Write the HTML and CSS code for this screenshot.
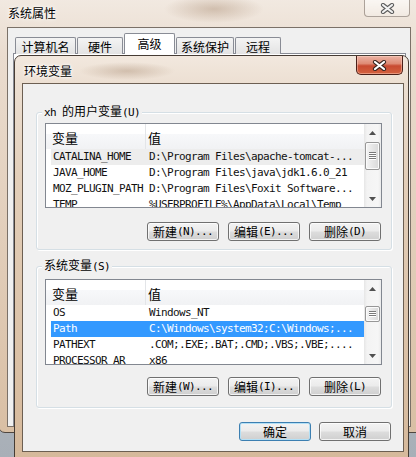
FILE: index.html
```html
<!DOCTYPE html>
<html>
<head>
<meta charset="utf-8">
<title>环境变量</title>
<link rel="stylesheet" href="styles.css">
</head>
<body>
<div class="owin">
  <div class="obar">
    <span class="otitle">系统属性</span>
    <span class="oclose"><svg width="15" height="11" viewBox="0 0 15 11"><path d="M3 2 L12 9 M12 2 L3 9" stroke="#5b5b5b" stroke-width="4.2" stroke-linecap="round"/><path d="M3 2 L12 9 M12 2 L3 9" stroke="#f2f2f2" stroke-width="2.2" stroke-linecap="round"/></svg></span>
  </div>
  <div class="oclient">
    <div class="tabs">
      <span class="tab">计算机名</span><span class="tab">硬件</span><span class="tab sel">高级</span><span class="tab">系统保护</span><span class="tab">远程</span>
    </div>
    <div class="tabpanel"></div>
  </div>
</div>

<div class="dlg">
  <div class="dbar">
    <span class="dtitle">环境变量</span>
    <span class="dclose"><svg width="15" height="11" viewBox="0 0 15 11"><path d="M3 2 L12 9 M12 2 L3 9" stroke="#3a2620" stroke-width="4.2" stroke-linecap="round"/><path d="M3 2 L12 9 M12 2 L3 9" stroke="#ffffff" stroke-width="2.2" stroke-linecap="round"/></svg></span>
  </div>
  <div class="dclient">
    <div class="grp g1">
      <span class="lbl"><span class="m">xh </span>的用户变量<span class="m">(U)</span></span>
      <div class="lv">
        <div class="lvmain">
          <div class="lvhead"><span class="hc1">变量</span><span class="hc2">值</span></div>
          <div class="row inact m"><span class="c1">CATALINA_HOME</span><span class="c2">D:\Program Files\apache-tomcat-...</span></div>
          <div class="row m"><span class="c1">JAVA_HOME</span><span class="c2">D:\Program Files\java\jdk1.6.0_21</span></div>
          <div class="row m"><span class="c1">MOZ_PLUGIN_PATH</span><span class="c2">D:\Program Files\Foxit Software...</span></div>
          <div class="row m"><span class="c1">TEMP</span><span class="c2">%USERPROFILE%\AppData\Local\Temp</span></div>
        </div>
        <div class="sb">
          <span class="arr"><svg width="7" height="4" viewBox="0 0 7 4"><path d="M0 4 L3.5 0 L7 4 Z" fill="#505050"/></svg></span>
          <span class="thumb t1"><svg width="7" height="8" viewBox="0 0 7 8"><path d="M0 0.5H7M0 2.5H7M0 4.5H7M0 6.5H7" stroke="#7a7a7a" stroke-width="1"/><path d="M0 1.5H7M0 3.5H7M0 5.5H7M0 7.5H7" stroke="#ffffff" stroke-width="1"/></svg></span>
          <span class="sp"></span>
          <span class="arr"><svg width="7" height="4" viewBox="0 0 7 4"><path d="M0 0 L3.5 4 L7 0 Z" fill="#505050"/></svg></span>
        </div>
      </div>
      <div class="btns">
        <span class="btn">新建<span class="m">(N)...</span></span>
        <span class="btn">编辑<span class="m">(E)...</span></span>
        <span class="btn">删除<span class="m">(D)</span></span>
      </div>
    </div>

    <div class="grp g2">
      <span class="lbl">系统变量<span class="m">(S)</span></span>
      <div class="lv">
        <div class="lvmain">
          <div class="lvhead"><span class="hc1">变量</span><span class="hc2">值</span></div>
          <div class="row m"><span class="c1">OS</span><span class="c2">Windows_NT</span></div>
          <div class="row sel m"><span class="c1">Path</span><span class="c2">C:\Windows\system32;C:\Windows;...</span></div>
          <div class="row m"><span class="c1">PATHEXT</span><span class="c2">.COM;.EXE;.BAT;.CMD;.VBS;.VBE;....</span></div>
          <div class="row m"><span class="c1">PROCESSOR_AR</span><span class="c2">x86</span></div>
        </div>
        <div class="sb">
          <span class="arr"><svg width="7" height="4" viewBox="0 0 7 4"><path d="M0 4 L3.5 0 L7 4 Z" fill="#505050"/></svg></span>
          <span class="thumb t2"><svg width="7" height="6" viewBox="0 0 7 6"><path d="M0 0.5H7M0 2.5H7M0 4.5H7" stroke="#7a7a7a" stroke-width="1"/><path d="M0 1.5H7M0 3.5H7M0 5.5H7" stroke="#ffffff" stroke-width="1"/></svg></span>
          <span class="sp"></span>
          <span class="arr"><svg width="7" height="4" viewBox="0 0 7 4"><path d="M0 0 L3.5 4 L7 0 Z" fill="#505050"/></svg></span>
        </div>
      </div>
      <div class="btns">
        <span class="btn">新建<span class="m">(W)...</span></span>
        <span class="btn">编辑<span class="m">(I)...</span></span>
        <span class="btn">删除<span class="m">(L)</span></span>
      </div>
    </div>

    <div class="foot">
      <span class="btn def">确定</span>
      <span class="btn">取消</span>
    </div>
  </div>
</div>
</body>
</html>
```

FILE: styles.css
```css
body {
  margin: 0;
  width: 416px;
  height: 457px;
  overflow: hidden;
  position: relative;
  background: linear-gradient(180deg, #c6cbd1, #a8afb7);
  font-family: "Noto Sans CJK SC", "Noto Sans", sans-serif;
  font-size: 12px;
  color: #000;
}

.m {
  font-family: "DejaVu Sans Mono", "Liberation Mono", monospace;
  font-size: 11px;
  letter-spacing: -0.62px;
}

/* outer window: 系统属性 */
.owin {
  position: absolute;
  left: -2px;
  top: -6px;
  width: 425px;
  height: 439px;
  box-sizing: border-box;
  border: 1px solid #4f463f;
  border-radius: 7px;
  display: flex;
  flex-direction: column;
  background:
    radial-gradient(ellipse 50px 14px at 215px 14px, rgba(150, 115, 85, 0.35), rgba(150, 115, 85, 0)),
    linear-gradient(180deg, #f2eae2 0, #eadccf 60px, #d9bfa4 100%);
}

.obar {
  height: 32px;
  flex: none;
  display: flex;
  align-items: flex-start;
}

.otitle {
  margin: 10px 0 0 9px;
  line-height: 16px;
  text-shadow: 0 0 6px #fff, 0 0 3px #fff;
}

.oclose {
  margin: 5px 12px 0 auto;
  width: 46px;
  height: 17px;
  box-sizing: border-box;
  border: 1px solid rgba(110, 95, 85, 0.55);
  border-top: none;
  border-radius: 0 0 4px 4px;
  background: linear-gradient(rgba(255, 255, 255, 0.6), rgba(255, 255, 255, 0.2));
  display: flex;
  align-items: center;
  justify-content: center;
}

.oclient {
  flex: 1;
  margin: 0 11px 5px 8px;
  box-sizing: border-box;
  border: 1px solid #7b7168;
  background: #f0f0f0;
  padding: 5px 4px 0 5px;
  display: flex;
  flex-direction: column;
}

.tabs {
  display: flex;
  align-items: flex-end;
  height: 21px;
  padding-left: 2px;
  position: relative;
  z-index: 1;
}

.tab {
  height: 17px;
  box-sizing: border-box;
  border: 1px solid #898c95;
  border-bottom: none;
  border-radius: 2px 2px 0 0;
  margin-right: 1px;
  padding-top: 1px;
  text-align: center;
  line-height: 15px;
  background: linear-gradient(#f4f4f4, #e3e3e3);
}

.tab:nth-child(1) { width: 61px; }
.tab:nth-child(2) { width: 46px; }
.tab:nth-child(3) { width: 51px; }
.tab:nth-child(4) { width: 58px; }
.tab:nth-child(5) { width: 46px; }

.tab.sel {
  height: 21px;
  padding-top: 2px;
  background: #fff;
  position: relative;
  z-index: 2;
}

.tabpanel {
  flex: 1;
  margin-top: -1px;
  border: 1px solid #898c95;
  background: #fff;
}

/* dialog: 环境变量 */
.dlg {
  position: absolute;
  left: 14px;
  top: 55px;
  width: 395px;
  box-sizing: border-box;
  border: 1px solid #463c34;
  border-radius: 7px 7px 0 0;
  padding: 0 4px 5px 7px;
  background:
    radial-gradient(ellipse 48px 9px at 112px 15px, rgba(140, 105, 75, 0.3), rgba(140, 105, 75, 0)),
    linear-gradient(180deg, #f2e8de 0, #ecdfd2 28px, #e3cfba 120px, #d6b99b 100%);
}

.dbar {
  height: 27px;
  margin: 0 -4px 0 -7px;
  display: flex;
  align-items: flex-start;
}

.dtitle {
  margin: 7px 0 0 9px;
  line-height: 16px;
  text-shadow: 0 0 5px #fff, 0 0 3px #fff, 0 0 2px #fff;
}

.dclose {
  margin: 0 5px 0 auto;
  width: 47px;
  height: 19px;
  box-sizing: border-box;
  border: 1px solid #4a1f18;
  border-top: none;
  border-radius: 0 0 5px 5px;
  background: linear-gradient(#ebb4a6 0%, #df8b75 42%, #c84a31 55%, #d4623f 100%);
  box-shadow: inset 0 0 0 1px rgba(255, 215, 200, 0.45);
  display: flex;
  align-items: center;
  justify-content: center;
}

.dclient {
  border: 1px solid #6c5f52;
  background: #f0f0f0;
  padding: 28px 11px 10px 13px;
}

.grp {
  position: relative;
  box-sizing: border-box;
  border: 1px solid #d5dfe5;
  border-radius: 3px;
  box-shadow: inset 1px 1px 0 #fff, 1px 1px 0 #fff;
  padding: 10px 9px 0 8px;
}

.g1 { height: 138px; }

.g2 {
  height: 142px;
  margin-top: 16px;
  padding-top: 12px;
}

.lbl {
  position: absolute;
  left: 5px;
  top: -10px;
  padding: 0 2px;
  background: #f0f0f0;
  line-height: 16px;
  white-space: nowrap;
}

.lv {
  height: 85px;
  box-sizing: border-box;
  border: 1px solid #828790;
  background: #fff;
  display: flex;
  overflow: hidden;
}

.g2 .lv { height: 86px; }

.lvmain {
  flex: 1;
  min-width: 0;
  overflow: hidden;
}

.lvhead {
  height: 25px;
  display: flex;
  align-items: center;
  font-size: 13px;
  line-height: 16px;
  padding-top: 2px;
  box-sizing: border-box;
  background: linear-gradient(#fff 0, #fff 40%, #f7f8fa 41%, #f1f2f4 100%);
}

.hc1 {
  width: 100px;
  box-sizing: border-box;
  padding-left: 6px;
  border-right: 1px solid #e3e5e8;
  align-self: stretch;
  display: flex;
  align-items: center;
  margin-top: -2px;
  padding-top: 2px;
}

.hc2 { padding-left: 2px; }

.row {
  height: 16px;
  line-height: 16px;
  margin-left: 5px;
  display: flex;
  white-space: pre;
  color: #111;
}

.row.inact { background: #ededed; }

.row.sel {
  background: #3399ff;
  color: #fff;
}

.c1 {
  width: 95px;
  flex: none;
  box-sizing: border-box;
  padding-left: 2px;
  overflow: hidden;
}

.c2 { padding-left: 3px; }

.sb {
  width: 17px;
  flex: none;
  display: flex;
  flex-direction: column;
  background: linear-gradient(90deg, #e6e6e6 0, #f3f3f3 3px, #f6f6f6 14px, #ebebeb 17px);
}

.arr {
  height: 17px;
  flex: none;
  display: flex;
  align-items: center;
  justify-content: center;
}

.thumb {
  flex: none;
  margin: 1px 1px 0;
  box-sizing: border-box;
  border: 1px solid #979797;
  border-radius: 2px;
  background: linear-gradient(90deg, #f5f5f5, #e6e6e6 50%, #d9d9d9);
  box-shadow: inset 0 0 0 1px #fbfbfb;
  display: flex;
  align-items: center;
  justify-content: center;
}

.t1 { height: 28px; }

.t2 {
  height: 16px;
  margin-top: 9px;
}

.sp { flex: 1; }

.btns {
  display: flex;
  justify-content: flex-end;
  gap: 9px;
  margin-top: 14px;
  padding-right: 1px;
}

.g2 .btns { margin-top: 12px; }

.btn {
  width: 72px;
  height: 19px;
  box-sizing: border-box;
  border: 1px solid #707070;
  border-radius: 3px;
  background: linear-gradient(#f3f3f3 0, #ebebeb 48%, #dddddd 52%, #cfcfcf 100%);
  box-shadow: inset 0 0 0 1px rgba(255, 255, 255, 0.75);
  display: flex;
  align-items: center;
  justify-content: center;
  line-height: 17px;
  white-space: nowrap;
}

.btn.def {
  border-color: #3c7fb1;
  box-shadow: inset 0 0 0 1px #b3e0f6;
}

.foot {
  display: flex;
  justify-content: flex-end;
  gap: 8px;
  margin-top: 14px;
  padding-right: 1px;
}
```
